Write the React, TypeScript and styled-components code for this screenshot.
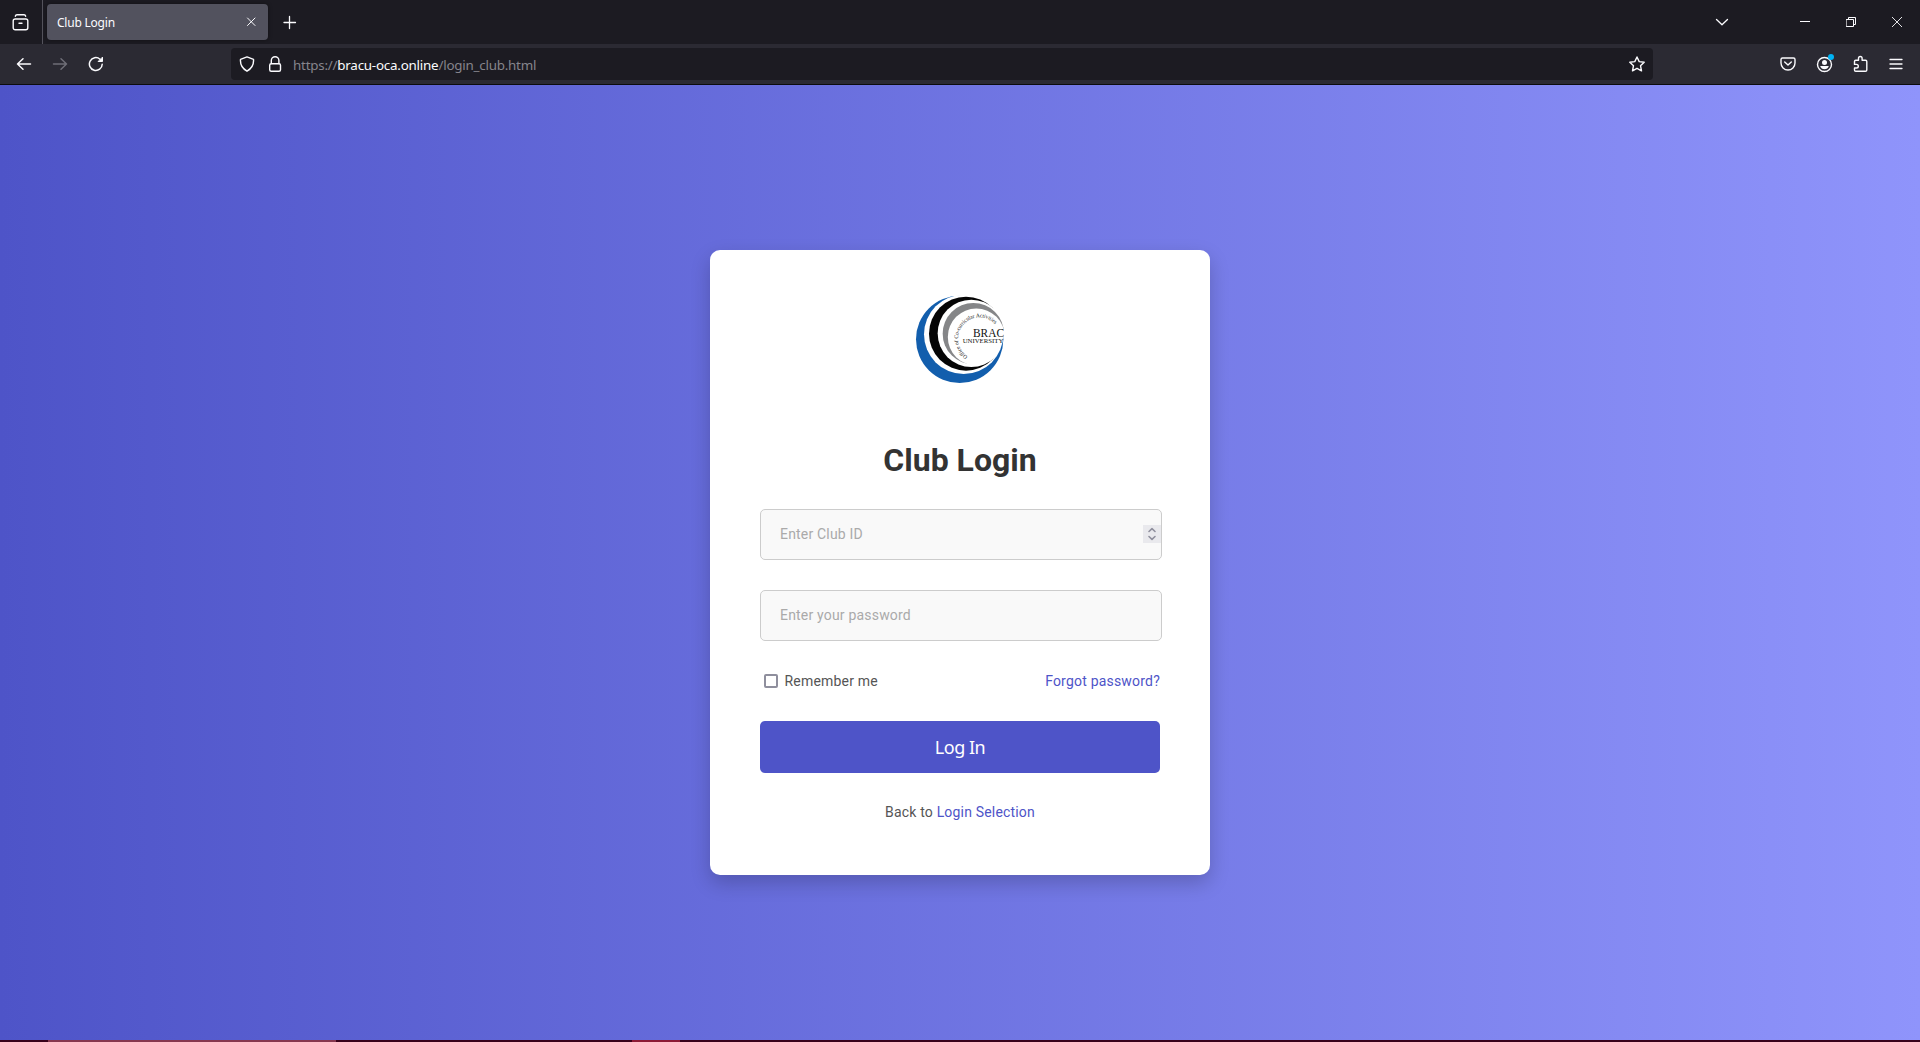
import React from "react";
import styled, { createGlobalStyle } from "styled-components";

const GlobalStyle = createGlobalStyle`
  * { box-sizing: border-box; }
  body { margin: 0; font-family: Roboto, "Liberation Sans", sans-serif; }
`;

const Window = styled.div`
  display: flex;
  flex-direction: column;
  width: 100vw;
  height: 100vh;
  min-height: 1042px;
  overflow: hidden;
`;

const chromeFont = `"Noto Sans", "Open Sans", sans-serif`;

const TabBar = styled.div`
  display: flex;
  align-items: center;
  height: 44px;
  flex: none;
  background: #1c1b22;
`;

const FirefoxView = styled.div`
  display: flex;
  align-items: center;
  justify-content: flex-end;
  width: 43px;
  height: 44px;
  padding-right: 13.5px;
  border-right: 1px solid #54535c;
`;

const Tab = styled.div`
  display: flex;
  align-items: center;
  justify-content: space-between;
  width: 221px;
  height: 36px;
  margin-left: 4px;
  padding: 0 10px;
  border-radius: 4px;
  background: #52525e;
  box-shadow: 0 0 4px rgba(0, 0, 0, 0.4);
  color: #fbfbfe;
  font: 12px/16px ${chromeFont};
`;

const TabTitle = styled.span`
  padding-top: 2px;
  letter-spacing: -0.22px;
`;

const NewTab = styled.div`
  display: flex;
  margin-left: 14px;
`;

const WindowControls = styled.div`
  display: flex;
  align-items: center;
  margin-left: auto;
  padding-right: 15px;
`;

const Control = styled.div<{ $gap: number }>`
  display: flex;
  margin-right: ${(p) => p.$gap}px;
`;

const NavBar = styled.div`
  display: flex;
  align-items: center;
  height: 41px;
  flex: none;
  background: #2b2a33;
  border-bottom: 1px solid #0c0c0d;
`;

const NavButtons = styled.div`
  display: flex;
  gap: 20px;
  width: 231px;
  padding-left: 16px;
`;

const UrlBar = styled.div`
  display: flex;
  align-items: center;
  width: 1422px;
  height: 32px;
  padding: 0 8px;
  border-radius: 4px;
  background: #1c1b22;
`;

const UrlIcon = styled.div<{ $gap: number }>`
  display: flex;
  margin-right: ${(p) => p.$gap}px;
`;

const UrlText = styled.div`
  flex: 1;
  padding-top: 2px;
  color: #86858c;
  font: 13.4px/20px ${chromeFont};
  letter-spacing: -0.23px;
  b {
    color: #fbfbfe;
    font-weight: 400;
  }
`;

const Tools = styled.div`
  display: flex;
  gap: 16px;
  margin-left: auto;
  padding-right: 14px;
`;

const Page = styled.main`
  display: flex;
  flex: 1;
  align-items: center;
  justify-content: center;
  background: linear-gradient(to right, #4e54c8, #8f94fb);
`;

const Card = styled.form`
  display: flex;
  flex-direction: column;
  width: 500px;
  height: 625px;
  padding: 30px 50px;
  border-radius: 10px;
  background: #fff;
  box-shadow: 0 8px 20px rgba(0, 0, 0, 0.2);
`;

const Title = styled.h1`
  margin: 41px 0 30px;
  color: #333;
  font-size: 32px;
  font-weight: 700;
  line-height: 38px;
  text-align: center;
`;

const Field = styled.label`
  display: flex;
  align-items: center;
  width: 402px;
  height: 51px;
  margin-bottom: 30px;
  padding-bottom: 2px;
  border: 1px solid #ccc;
  border-radius: 5px;
  background: #f9f9f9;
`;

const Input = styled.input`
  flex: 1;
  min-width: 0;
  padding: 0 0 0 19px;
  border: 0;
  outline: 0;
  background: transparent;
  color: #333;
  font: 14px/18px Roboto, sans-serif;
  letter-spacing: 0.19px;
  &::placeholder {
    color: #aaa;
    opacity: 1;
  }
`;

const Spinner = styled.span`
  display: flex;
  align-items: center;
  justify-content: center;
  width: 18px;
  height: 18px;
  background: #e9e9ed;
`;

const Options = styled.div`
  display: flex;
  align-items: center;
  justify-content: space-between;
  height: 20px;
  margin-bottom: 30px;
  color: #555;
  font-size: 14px;
  letter-spacing: 0.2px;
`;

const Remember = styled.label`
  display: flex;
  align-items: center;
  gap: 6.5px;
  padding-left: 4px;
`;

const Checkbox = styled.input`
  appearance: none;
  width: 14px;
  height: 14px;
  margin: 0;
  border: 2px solid #8f8f9d;
  border-radius: 2px;
  background: #fff;
`;

const Link = styled.a`
  color: #4e54c8;
  text-decoration: none;
`;

const LoginButton = styled.button`
  height: 52px;
  border: 0;
  border-radius: 5px;
  background: #4e54c8;
  color: #fff;
  font: 18px/22px ${chromeFont};
  letter-spacing: -0.5px;
`;

const Footer = styled.p`
  margin: 31px 0 0;
  color: #555;
  font-size: 14px;
  line-height: 17px;
  letter-spacing: 0.18px;
  text-align: center;
`;

const Logo = styled.svg`
  align-self: center;
  flex: none;
`;

const Taskbar = styled.div`
  display: flex;
  height: 2px;
  flex: none;
  background: #38001a;
`;

const TaskSegment = styled.i<{ $start: number; $width: number; $color: string }>`
  margin-left: ${(p) => p.$start}px;
  width: ${(p) => p.$width}px;
  background: ${(p) => p.$color};
`;

type IconProps = {
  children: React.ReactNode;
  size?: number;
  color?: string;
  stroke?: number;
};

const Icon = ({ children, size = 16, color = "#fbfbfe", stroke = 1.4 }: IconProps) => (
  <svg
    width={size}
    height={size}
    viewBox={`0 0 ${size} ${size}`}
    fill="none"
    stroke={color}
    strokeWidth={stroke}
    strokeLinecap="round"
    strokeLinejoin="round"
  >
    {children}
  </svg>
);

const ClubLogo = () => (
  <Logo width="120" height="120" viewBox="0 0 360 360">
    <defs>
      <path id="motto" d="M203 229.500A64 64 0 1 1 293 143" />
      <mask id="blueCut">
        <rect width="360" height="360" fill="#fff" />
        <circle cx="191" cy="163" r="119" fill="#000" />
      </mask>
      <mask id="blackCut">
        <rect width="360" height="360" fill="#fff" />
        <circle cx="214" cy="160" r="101" fill="#000" />
      </mask>
      <mask id="grayCut">
        <rect width="360" height="360" fill="#fff" />
        <circle cx="229" cy="171" r="85.500" fill="#000" />
      </mask>
    </defs>
    <circle cx="179" cy="178" r="131" fill="#125ead" mask="url(#blueCut)" />
    <circle cx="198" cy="161" r="111" fill="#050505" mask="url(#blackCut)" />
    <circle cx="220" cy="161" r="92" fill="#858688" mask="url(#grayCut)" />
    <g fill="#111" fontFamily="'Liberation Serif', serif">
      <text fontSize="17">
        <textPath href="#motto" textLength="216" lengthAdjust="spacingAndGlyphs">
          Office of Co-curricular Activities
        </textPath>
      </text>
      <text x="219" y="171" fontSize="35" textLength="93" lengthAdjust="spacingAndGlyphs">
        BRAC
      </text>
      <text x="188" y="190" fontSize="21" textLength="122" lengthAdjust="spacingAndGlyphs">
        UNIVERSITY
      </text>
    </g>
  </Logo>
);

export default function App() {
  return (
    <>
      <GlobalStyle />
      <Window>
        <TabBar>
          <FirefoxView>
            <Icon size={17}>
              <rect x="1.200" y="5" width="14.600" height="10.800" rx="2" />
              <path d="M3.300 2.200Q3.700.800 5 .800H12Q13.300.800 13.700 2.200M7 9.200H10" />
            </Icon>
          </FirefoxView>
          <Tab>
            <TabTitle>Club Login</TabTitle>
            <Icon size={14} stroke={1}>
              <path d="M3.500 3 11 10.500M11 3 3.500 10.500" />
            </Icon>
          </Tab>
          <NewTab>
            <Icon stroke={1.3}>
              <path d="M2 8.500H13.500M7.500 2.500V14.500" />
            </Icon>
          </NewTab>
          <WindowControls>
            <Control $gap={71}>
              <Icon size={14} stroke={1.3}>
                <path d="M1.500 4.500 7 9.800 12.500 4.500" />
              </Icon>
            </Control>
            <Control $gap={36}>
              <Icon size={10} stroke={1}>
                <path d="M0 4.500H10" />
              </Icon>
            </Control>
            <Control $gap={36}>
              <Icon size={10} stroke={1}>
                <path d="M.500 2.500H7.500V9.500H.500ZM2.500 2.500V.500H9.500V7.500H7.500" />
              </Icon>
            </Control>
            <Control $gap={3}>
              <Icon size={10} stroke={0.9}>
                <path d="M0 0 10 10M10 0 0 10" />
              </Icon>
            </Control>
          </WindowControls>
        </TabBar>
        <NavBar>
          <NavButtons>
            <Icon stroke={1.5}>
              <path d="M14.500 8H1.500M7 2.800 1.500 8 7 13.200" />
            </Icon>
            <Icon stroke={1.5} color="#6f6e77">
              <path d="M1.500 8H14.500M9 2.800 14.500 8 9 13.200" />
            </Icon>
            <Icon stroke={1.5}>
              <path d="M14.200 8.200A6.400 6.400 0 1 1 12 3.200" />
              <path d="M14.500 1.500V5.500H10.500Z" fill="#fbfbfe" stroke="#fbfbfe" strokeWidth="1" />
            </Icon>
          </NavButtons>
          <UrlBar>
            <UrlIcon $gap={12}>
              <Icon>
                <path d="M8 .900 14.500 3.300Q15.200 11 8 15.200.800 11 1.500 3.300Z" />
              </Icon>
            </UrlIcon>
            <UrlIcon $gap={10}>
              <Icon>
                <rect x="2.700" y="7.700" width="10.800" height="7.600" rx="1.500" />
                <path d="M4.300 7.500V4.500A3.800 3.800 0 0 1 11.900 4.500V7.500" />
              </Icon>
            </UrlIcon>
            <UrlText>
              https://<b>bracu-oca.online</b>/login_club.html
            </UrlText>
            <Icon>
              <path d="M8 1 10.200 5.600 15.200 6.200 11.500 9.700 12.500 14.800 8 12.300 3.500 14.800 4.500 9.700.800 6.200 5.800 5.600Z" />
            </Icon>
          </UrlBar>
          <Tools>
            <Icon size={20}>
              <path d="M4.500 4H15.500Q17 4 17 5.500V9A7 7 0 0 1 3 9V5.500Q3 4 4.500 4ZM6.700 8 10 11 13.300 8" />
            </Icon>
            <Icon size={20}>
              <circle cx="10.500" cy="10.500" r="7" />
              <g fill="#fbfbfe" stroke="none">
                <circle cx="10.500" cy="8.500" r="2.500" />
                <path d="M6.200 12H14.800Q13.700 15.300 10.500 15.300T6.200 12Z" />
              </g>
              <circle cx="17" cy="3" r="3" fill="#00b3f4" stroke="none" />
            </Icon>
            <Icon size={20}>
              <path d="M4.500 7.500Q4.500 6.200 5.700 6.200H8.500V4.300A1.800 1.800 0 0 1 12.100 4.300V6.200H15.500Q16.800 6.200 16.800 7.500V16Q16.800 17.300 15.500 17.300H5.700Q4.500 17.300 4.500 16V14H6.500A1.800 1.800 0 0 0 6.500 10.400H4.500Z" />
            </Icon>
            <Icon size={20} stroke={1.3}>
              <path d="M4 5.500H16M4 10H16M4 14.500H16" />
            </Icon>
          </Tools>
        </NavBar>
        <Page>
          <Card>
            <ClubLogo />
            <Title>Club Login</Title>
            <Field>
              <Input placeholder="Enter Club ID" />
              <Spinner>
                <Icon size={18} color="#8f8f9d" stroke={1.6}>
                  <path d="M6 6.500 9 3.700 12 6.500M6 11.500 9 14.300 12 11.500" />
                </Icon>
              </Spinner>
            </Field>
            <Field>
              <Input type="password" placeholder="Enter your password" />
            </Field>
            <Options>
              <Remember>
                <Checkbox type="checkbox" />
                Remember me
              </Remember>
              <Link>Forgot password?</Link>
            </Options>
            <LoginButton type="button">Log In</LoginButton>
            <Footer>
              Back to <Link>Login Selection</Link>
            </Footer>
          </Card>
        </Page>
        <Taskbar>
          <TaskSegment $start={48} $width={288} $color="#86374f" />
          <TaskSegment $start={296} $width={48} $color="#8c1a36" />
        </Taskbar>
      </Window>
    </>
  );
}
